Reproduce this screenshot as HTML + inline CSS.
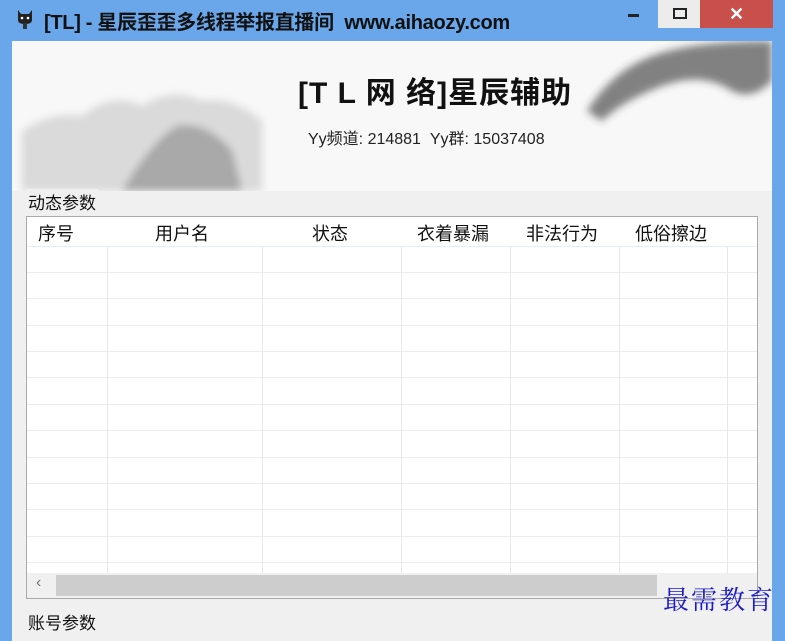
<!DOCTYPE html>
<html><head><meta charset="utf-8">
<style>
*{margin:0;padding:0;box-sizing:border-box}
body{width:785px;height:628px;overflow:hidden;background:#6aa6ea;font-family:"Liberation Sans","Noto Sans CJK SC",sans-serif;position:relative}
.title{position:absolute;left:44px;top:6px;font-size:20px;font-weight:bold;color:#111;letter-spacing:-0.3px;white-space:nowrap}
.icon{position:absolute;left:15px;top:8px;width:20px;height:22px}
.min{position:absolute;left:628px;top:14px;width:11px;height:3px;background:#222}
.max{position:absolute;left:658px;top:0;width:42px;height:28px;background:#ececec}
.max i{position:absolute;left:15px;top:8px;width:14px;height:11px;border:2px solid #222}
.close{position:absolute;left:700px;top:0;width:73px;height:28px;background:#c9504a;color:#fff;font-size:18px;text-align:center;line-height:28px;font-weight:bold}
.client{position:absolute;left:12px;top:41px;width:760px;height:600px;background:#f0f0f0}
.banner{position:absolute;left:0;top:0;width:760px;height:150px;background:#f8f8f8;overflow:hidden}
.h1{position:absolute;left:286px;top:27px;font-family:"Liberation Sans","Noto Sans CJK SC",sans-serif;font-size:30px;font-weight:bold;color:#111;letter-spacing:1px;white-space:nowrap}
.h2{position:absolute;left:296px;top:84px;font-size:16px;color:#222;white-space:nowrap}
.gl{position:absolute;font-size:17px;color:#111;background:#f0f0f0;padding:0 2px}
.table{position:absolute;left:14px;top:175px;width:732px;height:383px;border:1px solid #a9a9a9;background:#fff;overflow:hidden}
.hd{position:absolute;left:0;top:0;width:730px;height:30px;border-bottom:1px solid #e6eef8;font-size:18px;color:#111}
.hd span{position:absolute;top:3px}
.vl{position:absolute;top:0;width:1px;height:356px;background:#e8e8e8}
.hl{position:absolute;left:0;width:730px;height:1px;background:#ececec}
.sb{position:absolute;left:0;top:356px;width:730px;height:25px;background:#f0f0f0}
.thumb{position:absolute;left:29px;top:2px;width:601px;height:21px;background:#cdcdcd}
.wm{position:absolute;left:663px;top:580px;font-family:"Noto Serif CJK SC",serif;font-size:26px;color:#1a1acc;letter-spacing:2px;white-space:nowrap}
</style></head><body>
<svg class="icon" viewBox="0 0 20 22"><path d="M3 2 L6 6 L14 6 L17 2 L17 12 Q17 16 10 16 Q3 16 3 12Z" fill="#222"/><rect x="8" y="15" width="4" height="6" fill="#333"/><circle cx="7" cy="10" r="1.3" fill="#fff"/><circle cx="13" cy="10" r="1.3" fill="#fff"/></svg>
<div class="title">[TL] - 星辰歪歪多线程举报直播间&nbsp; www.aihaozy.com</div>
<div class="min"></div>
<div class="max"><i></i></div>
<div class="close">✕</div>
<div class="client">
 <div class="banner">
  <svg width="760" height="150" style="position:absolute;left:0;top:0">
   <defs><filter id="b"><feGaussianBlur stdDeviation="4"/></filter></defs>
   <g filter="url(#b)">
    <path d="M10 90 Q40 70 70 75 Q100 50 130 65 Q160 45 190 60 Q220 55 250 80 L250 150 L10 150Z" fill="#bbb" opacity="0.5"/>
    <path d="M110 150 Q140 100 165 85 Q195 80 220 110 L230 150Z" fill="#777" opacity="0.5"/>
    <path d="M575 70 Q600 30 640 15 Q680 0 760 0 L760 40 Q740 60 720 50 Q690 30 650 45 Q610 60 590 80Z" fill="#333" opacity="0.6"/>
   </g>
  </svg>
  <div class="h1">[T L 网 络]星辰辅助</div>
  <div class="h2">Yy频道: 214881&nbsp; Yy群: 15037408</div>
 </div>
 <div class="gl" style="left:14px;top:148px">动态参数</div>
 <div class="table">
  <div class="vl" style="left:80px"></div><div class="vl" style="left:235px"></div><div class="vl" style="left:374px"></div><div class="vl" style="left:483px"></div><div class="vl" style="left:592px"></div><div class="vl" style="left:700px"></div>
  <div class="hl" style="top:55px"></div><div class="hl" style="top:81px"></div><div class="hl" style="top:108px"></div><div class="hl" style="top:134px"></div><div class="hl" style="top:160px"></div><div class="hl" style="top:187px"></div><div class="hl" style="top:213px"></div><div class="hl" style="top:240px"></div><div class="hl" style="top:266px"></div><div class="hl" style="top:292px"></div><div class="hl" style="top:319px"></div><div class="hl" style="top:345px"></div>
  <div class="hd" style="background:#fff">
   <span style="left:11px">序号</span><span style="left:128px">用户名</span><span style="left:285px">状态</span><span style="left:390px">衣着暴漏</span><span style="left:499px">非法行为</span><span style="left:608px">低俗擦边</span>
  </div>
  <div class="sb"><span style="position:absolute;left:9px;top:1px;color:#777;font-size:16px">‹</span><div class="thumb"></div></div>
 </div>
 <div class="gl" style="left:14px;top:568px">账号参数</div>
</div>
<div class="wm">最需教育</div>
</body></html>
